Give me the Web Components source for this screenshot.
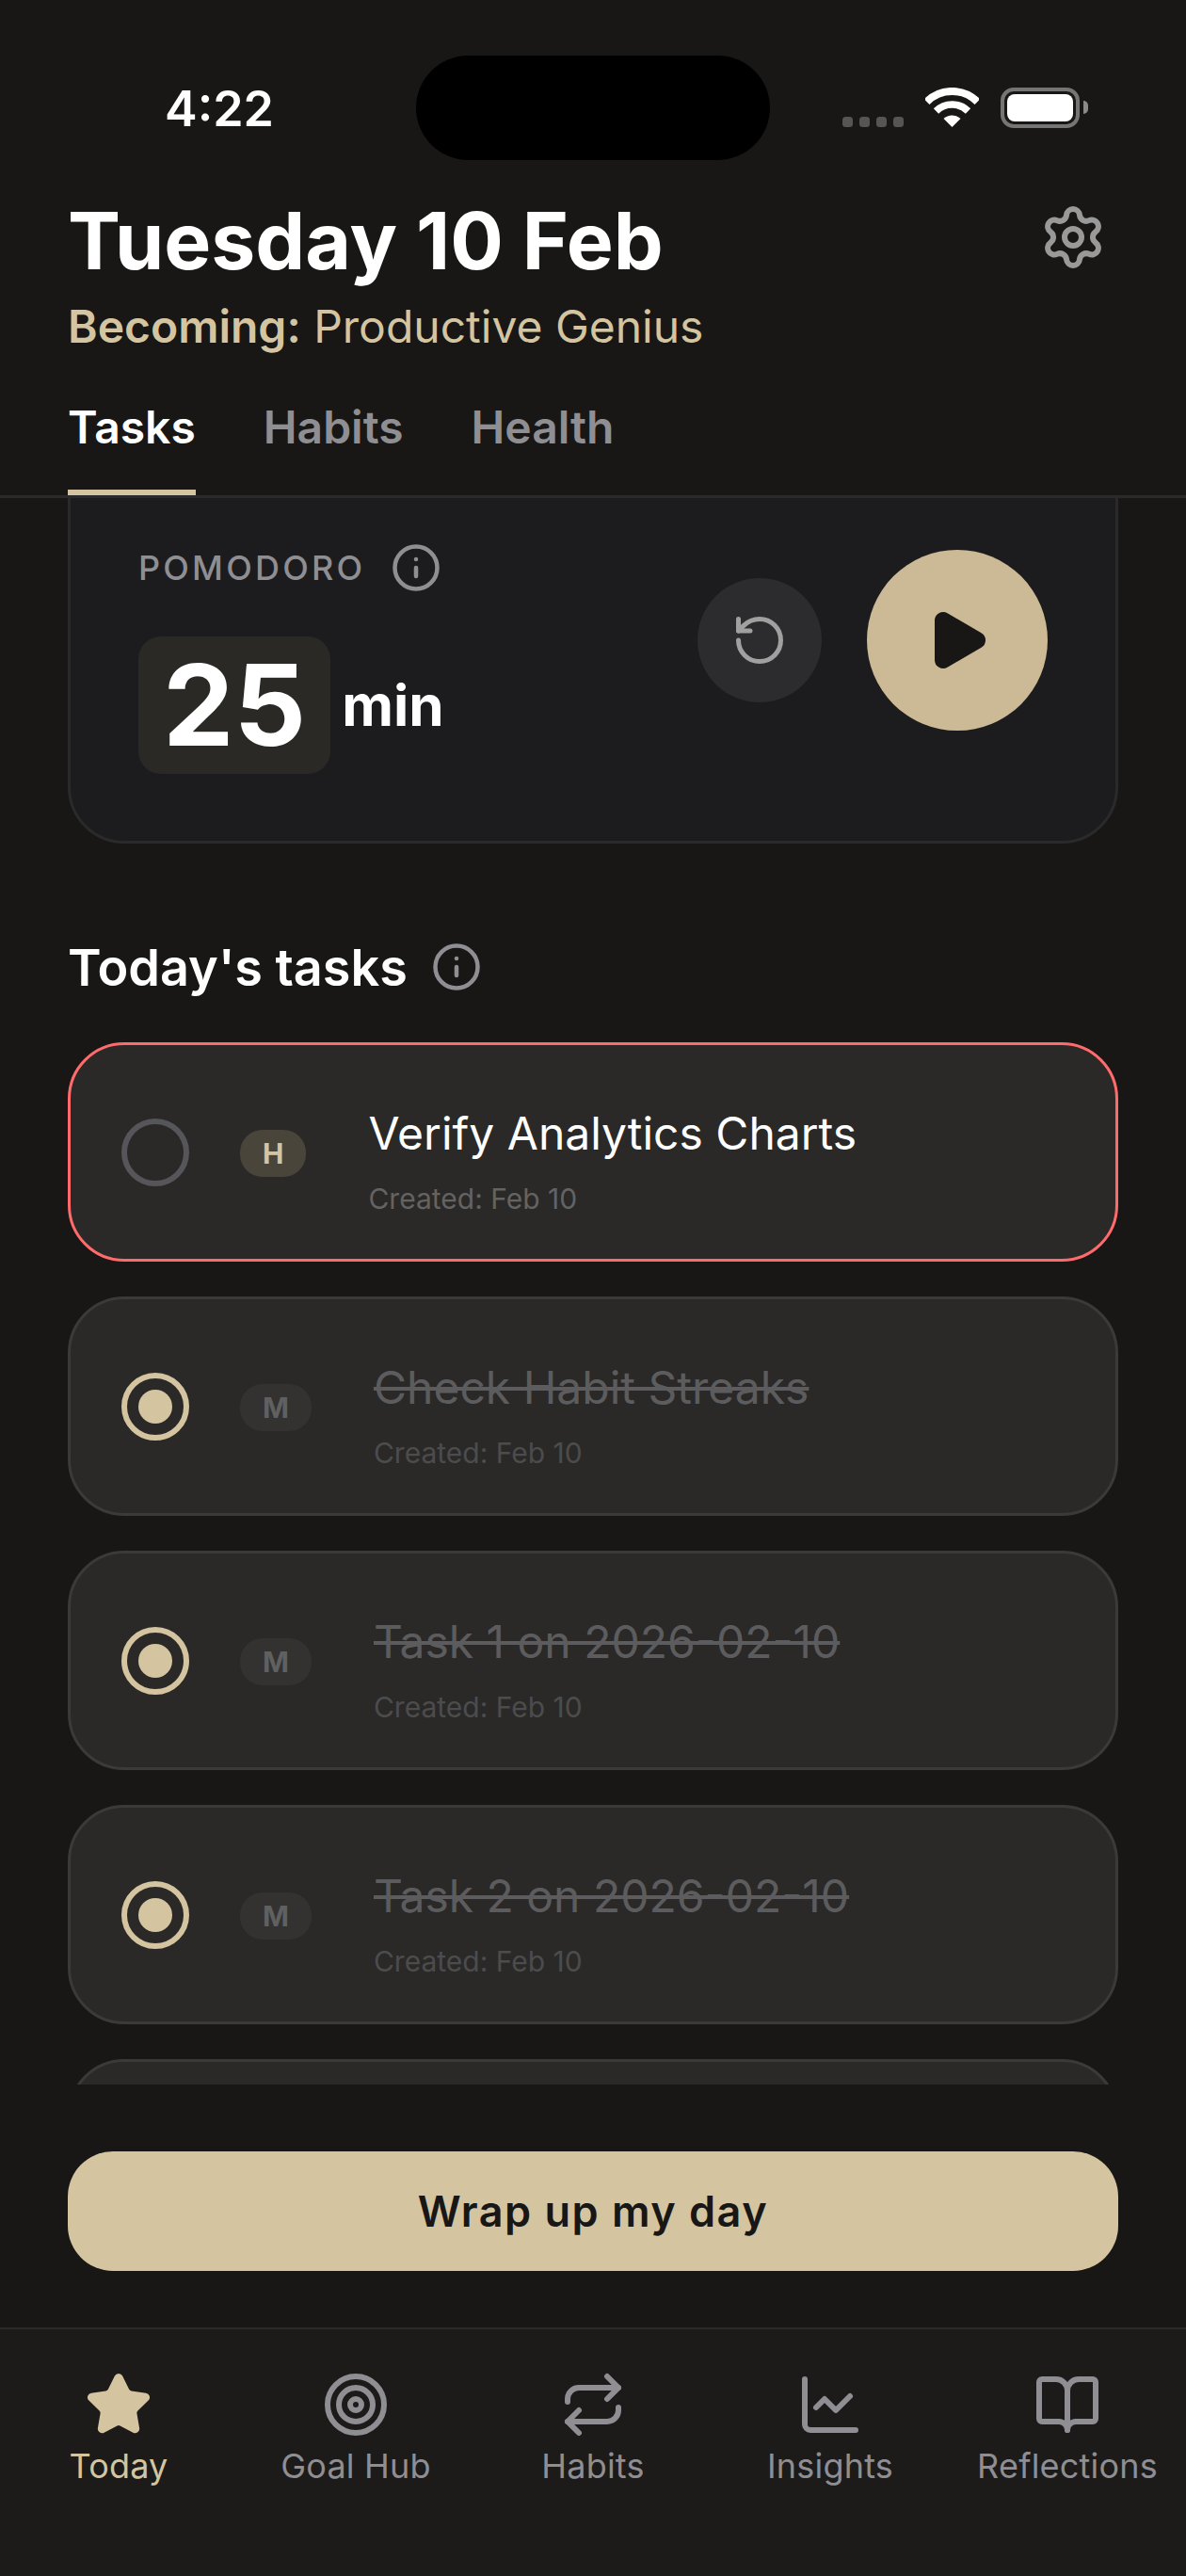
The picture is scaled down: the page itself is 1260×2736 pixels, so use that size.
<!DOCTYPE html>
<html lang="en">
<head>
<meta charset="utf-8">
<title>Today</title>
<style>
  html, body { margin: 0; background: #181716; }
  body { font-family: "Inter", "Liberation Sans", sans-serif; color: #fff; }
  app-shell { width: 1260px; height: 2736px; }
</style>
</head>
<body>
<app-shell>
  <status-bar slot="top"></status-bar>
  <day-header slot="top" title="Tuesday 10 Feb" becoming="Productive Genius"></day-header>
  <tab-bar slot="top"></tab-bar>

  <pomodoro-card></pomodoro-card>
  <section-title>Today's tasks</section-title>
  <task-list>
    <task-row priority="H" urgent>Verify Analytics Charts</task-row>
    <task-row priority="M" done>Check Habit Streaks</task-row>
    <task-row priority="M" done>Task 1 on 2026-02-10</task-row>
    <task-row priority="M" done>Task 2 on 2026-02-10</task-row>
    <task-row peek></task-row>
  </task-list>

  <wrap-button slot="bottom">Wrap up my day</wrap-button>
  <bottom-nav slot="bottom"></bottom-nav>
</app-shell>

<script>
const ICONS = {
  info: `<circle cx="12" cy="12" r="10"/><path d="M12 16v-4"/><path d="M12 8h.01"/>`,
  gear: `<path d="M9.671 4.136a2.34 2.34 0 0 1 4.659 0 2.34 2.34 0 0 0 3.319 1.915 2.34 2.34 0 0 1 2.33 4.033 2.34 2.34 0 0 0 0 3.831 2.34 2.34 0 0 1-2.33 4.033 2.34 2.34 0 0 0-3.319 1.915 2.34 2.34 0 0 1-4.659 0 2.34 2.34 0 0 0-3.32-1.915 2.34 2.34 0 0 1-2.33-4.033 2.34 2.34 0 0 0 0-3.831A2.34 2.34 0 0 1 6.35 6.051a2.34 2.34 0 0 0 3.319-1.915"/><circle cx="12" cy="12" r="3"/>`,
  reset: `<path d="M3 12a9 9 0 1 0 9-9 9.75 9.75 0 0 0-6.74 2.74L3 8"/><path d="M3 3v5h5"/>`,
  play: `<path fill="currentColor" d="M5 5a2 2 0 0 1 3.008-1.728l11.997 6.998a2 2 0 0 1 .003 3.458l-12 7A2 2 0 0 1 5 19z"/>`,
  star: `<path fill="currentColor" d="M11.525 2.295a.53.53 0 0 1 .95 0l2.31 4.679a2.123 2.123 0 0 0 1.595 1.16l5.166.756a.53.53 0 0 1 .294.904l-3.736 3.638a2.123 2.123 0 0 0-.611 1.878l.882 5.14a.53.53 0 0 1-.771.56l-4.618-2.428a2.122 2.122 0 0 0-1.973 0L6.396 21.01a.53.53 0 0 1-.77-.56l.881-5.139a2.122 2.122 0 0 0-.611-1.879L2.16 9.795a.53.53 0 0 1 .294-.906l5.165-.755a2.122 2.122 0 0 0 1.597-1.16z"/>`,
  target: `<circle cx="12" cy="12" r="10"/><circle cx="12" cy="12" r="6"/><circle cx="12" cy="12" r="2"/>`,
  repeat: `<path d="m17 2 4 4-4 4"/><path d="M3 11v-1a4 4 0 0 1 4-4h14"/><path d="m7 22-4-4 4-4"/><path d="M21 13v1a4 4 0 0 1-4 4H3"/>`,
  chart: `<path d="M3 3v16a2 2 0 0 0 2 2h16"/><path d="m19 9-5 5-4-4-3 3"/>`,
  book: `<path d="M12 7v14"/><path d="M3 18a1 1 0 0 1-1-1V4a1 1 0 0 1 1-1h5a4 4 0 0 1 4 4 4 4 0 0 1 4-4h5a1 1 0 0 1 1 1v13a1 1 0 0 1-1 1h-6a3 3 0 0 0-3 3 3 3 0 0 0-3-3z"/>`,
};

const icon = (name, size) => /* html */`
  <svg width="${size}" height="${size}" viewBox="0 0 24 24" fill="none" stroke="currentColor"
    stroke-width="2" stroke-linecap="round" stroke-linejoin="round" style="display:block;flex:none">${ICONS[name]}</svg>`;

class AppShell extends HTMLElement {
  constructor() {
    super();
    this.attachShadow({ mode: "open" });
    this.shadowRoot.innerHTML = /* html */`
    <style>
      :host { display: flex; flex-direction: column; overflow: hidden; }
      .scroll { flex: 1; min-height: 0; overflow: hidden; padding: 0 72px; }
    </style>
    <slot name="top"></slot>
    <div class="scroll"><slot></slot></div>
    <slot name="bottom"></slot>
    `;
  }
}

class StatusBar extends HTMLElement {
  constructor() {
    super();
    this.attachShadow({ mode: "open" });
    this.shadowRoot.innerHTML = /* html */`
    <style>
      :host { display: grid; grid-template-columns: 442px 376px 1fr; height: 206px; box-sizing: border-box; padding-top: 59px; }
      .time { font-size: 52px; font-weight: 600; line-height: 62px; padding: 26px 0 0 175px; color: #fff; }
      .island { height: 111px; background: #000; border-radius: 56px; }
      .icons { display: flex; align-items: flex-start; padding: 34px 0 0 77px; }
      .dots { display: flex; gap: 7px; margin: 31px 23px 0 0; }
      .dots i { width: 11px; height: 11px; border-radius: 3.5px; background: #555; }
      .wifi { display: block; margin-right: 23px; }
      .battery { box-sizing: border-box; width: 84px; height: 43px; border: 4px solid #757575; border-radius: 14px; padding: 3px; }
      .battery b { display: block; height: 100%; background: #fff; border-radius: 8px; }
      .nub { width: 5px; height: 14px; margin: 14px 0 0 4px; background: #8a8a8a; border-radius: 0 5px 5px 0; }
    </style>
    <div class="time">4:22</div>
    <div class="island"></div>
    <div class="icons">
      <div class="dots"><i></i><i></i><i></i><i></i></div>
      <svg class="wifi" width="57" height="42" viewBox="0 0 57 42" fill="none" stroke="#fff">
        <path stroke-width="8" d="M1.6 15.1A38 38 0 0 1 55.4 15.1"/>
        <path stroke-width="7.5" d="M11.5 25A24 24 0 0 1 45.5 25"/>
        <path fill="#fff" stroke="none" d="M28.5 42L19.5 33A13 13 0 0 1 37.5 33Z"/>
      </svg>
      <div class="battery"><b></b></div>
      <div class="nub"></div>
    </div>
    `;
  }
}

class DayHeader extends HTMLElement {
  constructor() {
    super();
    this.attachShadow({ mode: "open" });
  }

  connectedCallback() {
    this.shadowRoot.innerHTML = /* html */`
    <style>
      :host { display: flex; justify-content: space-between; padding: 0 84px 0 72px; }
      h1 { margin: 0; font-size: 84px; line-height: 100px; font-weight: 700; color: #fff; }
      p { margin: 11px 0 0; font-size: 48px; line-height: 60px; font-weight: 400; color: #d4c5a0; }
      p b { font-weight: 600; }
      .gear { color: #999; margin-top: 10px; }
    </style>
    <div>
      <h1>${this.getAttribute("title")}</h1>
      <p><b>Becoming:</b> ${this.getAttribute("becoming")}</p>
    </div>
    <div class="gear">${icon("gear", 72)}</div>
    `;
  }
}

class TabBar extends HTMLElement {
  constructor() {
    super();
    this.attachShadow({ mode: "open" });
    this.shadowRoot.innerHTML = /* html */`
    <style>
      :host { display: flex; gap: 72px; padding: 0 72px; margin-top: 40px; height: 112px; box-sizing: border-box; border-bottom: 3px solid #2a2a2a; position: relative; z-index: 1; }
      span { font-size: 48px; font-weight: 600; line-height: 60px; color: #8e8e93; height: 109px; box-sizing: border-box; padding-top: 7px; }
      .on { color: #fff; border-bottom: 6px solid #d4c5a0; }
    </style>
    <span class="on">Tasks</span><span>Habits</span><span>Health</span>
    `;
  }
}

class PomodoroCard extends HTMLElement {
  constructor() {
    super();
    this.attachShadow({ mode: "open" });
    this.shadowRoot.innerHTML = /* html */`
    <style>
      :host { display: flex; justify-content: space-between; align-items: center; box-sizing: border-box; height: 432px; margin-top: -65px; padding: 0 72px; background: #1c1c1e; border: 3px solid #2a2a2a; border-radius: 60px; }
      .left { padding: 109px 0 71px; }
      .label { display: flex; align-items: center; gap: 30px; height: 54px; font-size: 36px; font-weight: 500; letter-spacing: 3.2px; color: #8e8e93; }
      .label svg { margin-left: -3px; }
      .time { display: flex; align-items: center; gap: 12px; margin-top: 46px; }
      .num { background: #2a2926; border-radius: 24px; padding: 12px 26px; font-size: 120px; line-height: 122px; font-weight: 700; color: #fff; }
      .unit { font-size: 60px; font-weight: 700; color: #fff; }
      .controls { display: flex; align-items: center; gap: 48px; }
      .reset, .play { display: flex; align-items: center; justify-content: center; border-radius: 50%; }
      .reset { width: 132px; height: 132px; background: #2c2c2e; color: #a0a0a0; }
      .play { width: 192px; height: 192px; background: #ccb995; color: #181716; }
    </style>
    <div class="left">
      <div class="label">POMODORO ${icon("info", 54)}</div>
      <div class="time"><div class="num">25</div><div class="unit">min</div></div>
    </div>
    <div class="controls">
      <div class="reset">${icon("reset", 60)}</div>
      <div class="play">${icon("play", 72)}</div>
    </div>
    `;
  }
}

class SectionTitle extends HTMLElement {
  constructor() {
    super();
    this.attachShadow({ mode: "open" });
    this.shadowRoot.innerHTML = /* html */`
    <style>
      :host { display: flex; align-items: center; gap: 25px; height: 54px; margin: 104px 0 53px; font-size: 54px; font-weight: 600; color: #fff; }
      .i { color: #8e8e93; }
    </style>
    <slot></slot><span class="i">${icon("info", 54)}</span>
    `;
  }
}

class TaskList extends HTMLElement {
  constructor() {
    super();
    this.attachShadow({ mode: "open" });
    this.shadowRoot.innerHTML = /* html */`
    <style>:host { display: flex; flex-direction: column; gap: 37px; }</style>
    <slot></slot>
    `;
  }
}

class TaskRow extends HTMLElement {
  constructor() {
    super();
    this.attachShadow({ mode: "open" });
  }

  connectedCallback() {
    const done = this.hasAttribute("done");
    const body = this.hasAttribute("peek") ? "" : /* html */`
    <div class="radio">${done ? "<i></i>" : ""}</div>
    <div class="badge">${this.getAttribute("priority")}</div>
    <div class="text">
      <div class="title"><slot></slot></div>
      <div class="meta">Created: Feb 10</div>
    </div>`;
    this.shadowRoot.innerHTML = /* html */`
    <style>
      :host { display: flex; align-items: center; flex: none; box-sizing: border-box; height: 233px; padding-left: 54px; background: #2a2928; border: 3px solid #3a3a38; border-radius: 60px; }
      :host([urgent]) { border-color: #ff6b6b; }
      .radio { flex: none; box-sizing: border-box; width: 72px; height: 72px; border-radius: 50%; border: 6px solid #55555a; display: flex; align-items: center; justify-content: center; }
      :host([done]) .radio { border-color: #d4c5a0; }
      .radio i { width: 36px; height: 36px; border-radius: 50%; background: #d4c5a0; }
      .badge { flex: none; margin: 2px 66px 0 54px; padding: 7px 24px; border-radius: 24px; background: #4a453a; color: #d4c5a0; font-size: 30px; line-height: 36px; font-weight: 700; }
      :host([done]) .badge { background: #333230; color: #606060; }
      .text { padding-top: 17px; }
      .title { font-size: 48px; line-height: 60px; font-weight: 400; color: #fff; }
      :host([done]) .title { color: #5c5c5e; text-decoration: line-through; }
      .meta { margin-top: 21px; font-size: 30px; line-height: 36px; color: #636363; }
      :host([done]) .meta { color: #4c4c4c; }
    </style>
    ${body}
    `;
  }
}

class WrapButton extends HTMLElement {
  constructor() {
    super();
    this.attachShadow({ mode: "open" });
    this.shadowRoot.innerHTML = /* html */`
    <style>
      :host { display: block; padding: 71px 72px 60px; }
      div { height: 127px; display: flex; align-items: center; justify-content: center; border-radius: 48px; background: #d4c5a0; color: #181716; font-size: 45px; font-weight: 600; letter-spacing: 1.5px; }
    </style>
    <div><slot></slot></div>
    `;
  }
}

class BottomNav extends HTMLElement {
  constructor() {
    super();
    this.attachShadow({ mode: "open" });
    const items = [["star", "Today"], ["target", "Goal Hub"], ["repeat", "Habits"], ["chart", "Insights"], ["book", "Reflections"]];
    this.shadowRoot.innerHTML = /* html */`
    <style>
      :host { display: grid; grid-template-columns: repeat(5, 1fr); height: 264px; box-sizing: border-box; padding-top: 44px; background: #1c1b1a; border-top: 2px solid #2a2a2a; }
      div { display: flex; flex-direction: column; align-items: center; color: #8e8e93; font-size: 36px; line-height: 44px; letter-spacing: .2px; white-space: nowrap; }
      div span { margin-top: 7px; }
      .on { color: #d4c5a0; }
    </style>
    ${items.map(([name, label], i) => `<div class="${i ? "" : "on"}">${icon(name, 72)}<span>${label}</span></div>`).join("")}
    `;
  }
}

customElements.define("app-shell", AppShell);
customElements.define("status-bar", StatusBar);
customElements.define("day-header", DayHeader);
customElements.define("tab-bar", TabBar);
customElements.define("pomodoro-card", PomodoroCard);
customElements.define("section-title", SectionTitle);
customElements.define("task-list", TaskList);
customElements.define("task-row", TaskRow);
customElements.define("wrap-button", WrapButton);
customElements.define("bottom-nav", BottomNav);
</script>
</body>
</html>
